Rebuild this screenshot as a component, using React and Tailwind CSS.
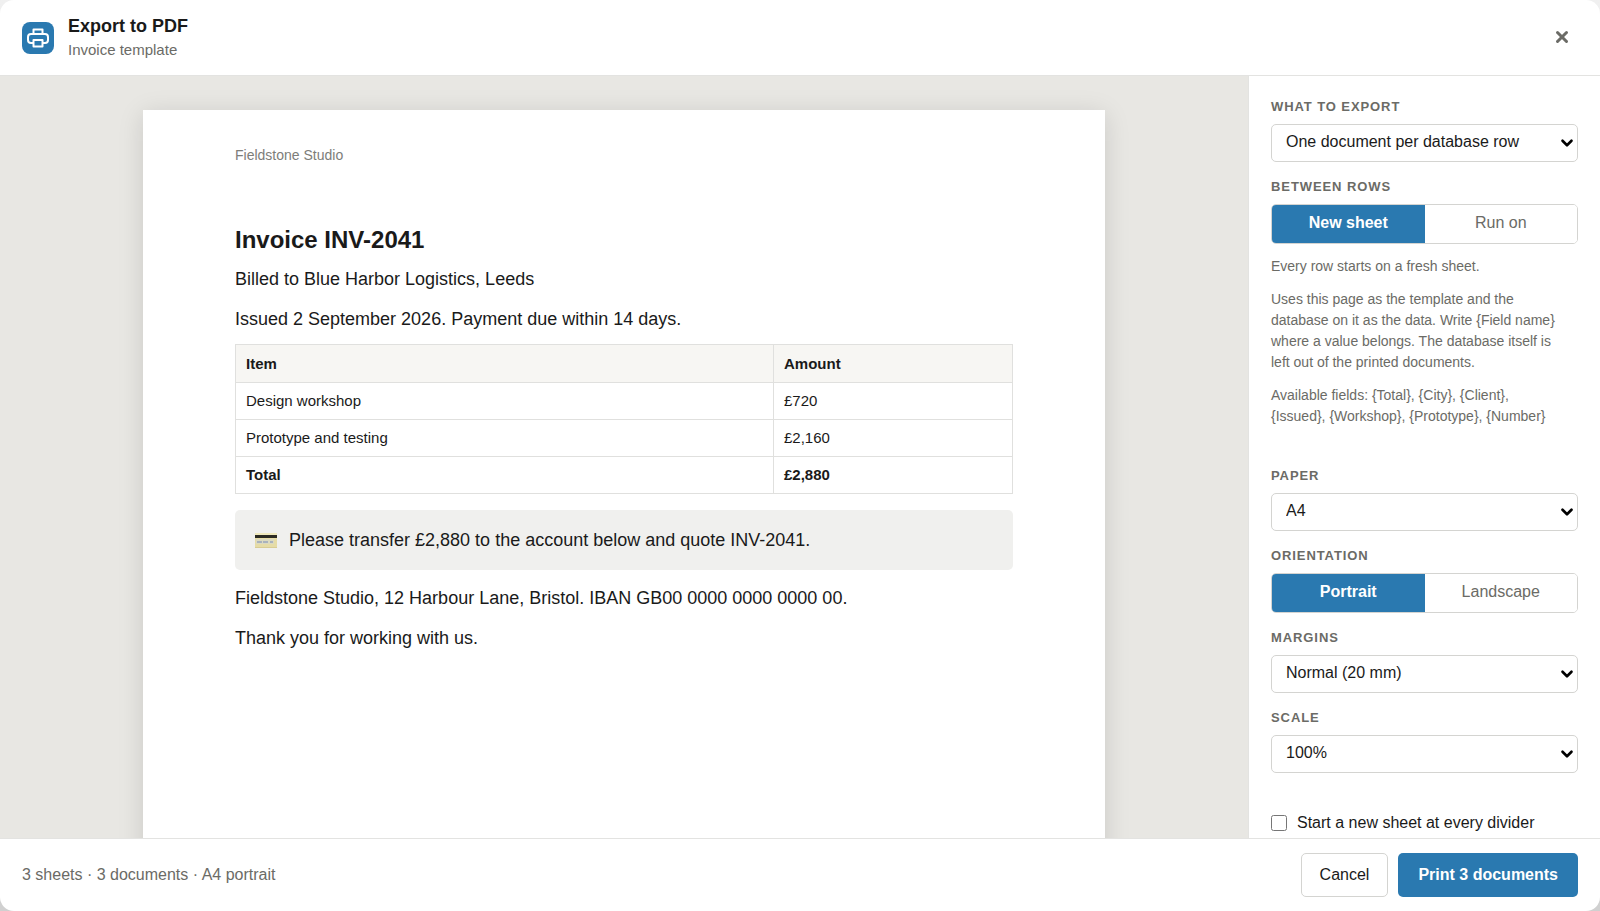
import { useState } from "react";
import { ChevronDown, X } from "lucide-react";

const lineItems = [
  { item: "Design workshop", amount: "£720" },
  { item: "Prototype and testing", amount: "£2,160" },
];

const templateHelp =
  "Uses this page as the template and the database on it as the data. Write {Field name} where a value belongs. The database itself is left out of the printed documents.";

const fieldsHelp =
  "Available fields: {Total}, {City}, {Client}, {Issued}, {Workshop}, {Prototype}, {Number}";

const PrinterIcon = () => (
  <svg
    viewBox="0 0 22 20"
    className="w-[22px] h-5"
    fill="none"
    stroke="currentColor"
    strokeWidth="2"
    strokeLinejoin="round"
    aria-hidden="true"
  >
    <path d="M6.5 6V1.5h9V6" />
    <path d="M6.5 15H4a3 3 0 0 1-3-3V9a3 3 0 0 1 3-3h14a3 3 0 0 1 3 3v3a3 3 0 0 1-3 3h-2.5" />
    <path d="M6.5 12h9v6.5h-9z" />
  </svg>
);

const CardIcon = () => (
  <svg viewBox="0 0 22 15" className="w-[22px] h-[15px]" aria-hidden="true">
    <rect width="22" height="15" rx="1" fill="#e6dca6" />
    <rect width="22" height="4" rx="1" fill="#f0e9bd" />
    <rect y="2" width="22" height="3" fill="#2b2a22" />
    <rect x="1" y="6" width="18" height="5" fill="#dcdac0" />
    <path d="M2 9h5M8 9h5M15 9h3" stroke="#a9b2bd" strokeWidth="2" />
    <rect y="14" width="22" height="1" fill="#d8cc94" />
  </svg>
);

const SelectField = ({ id, label, options }) => (
  <div>
    <label
      htmlFor={id}
      className="block mb-2 text-[13px] leading-[18px] font-bold uppercase tracking-[0.07em] text-[#6b6b66]"
    >
      {label}
    </label>
    <div className="relative">
      <select
        id={id}
        className="block appearance-none w-full h-[38px] pl-[14px] pr-7 pb-[2px] rounded-[5px] border border-[#d4d4d1] bg-white text-base text-[#1a1a1a]"
      >
        {options.map((o) => (
          <option key={o}>{o}</option>
        ))}
      </select>
      <ChevronDown
        size={18}
        strokeWidth={3.5}
        className="absolute right-[2px] top-[10px] text-black pointer-events-none"
      />
    </div>
  </div>
);

const Segmented = ({ id, label, options, value, onChange }) => (
  <div role="group" aria-labelledby={id}>
    <div
      id={id}
      className="mb-2 text-[13px] leading-[18px] font-bold uppercase tracking-[0.07em] text-[#6b6b66]"
    >
      {label}
    </div>
    <div className="flex h-10 rounded-[5px] border border-[#d4d4d1] overflow-hidden">
      {options.map((o) => (
        <button
          key={o}
          type="button"
          aria-pressed={o === value}
          onClick={() => onChange(o)}
          className={
            o === value
              ? "flex-1 pb-[2px] bg-[#2a79b0] text-white text-base font-bold"
              : "flex-1 pb-[2px] bg-white text-[#6b6b66] text-base"
          }
        >
          {o}
        </button>
      ))}
    </div>
  </div>
);

const InvoiceSheet = () => (
  <article className="w-full max-w-[962px] mx-auto aspect-[210/297] px-[92px] pt-9 bg-white shadow-[0_4px_24px_rgba(0,0,0,0.13)] text-lg leading-6">
    <p className="text-sm leading-[18px] text-[#7d7d79]">Fieldstone Studio</p>
    <h2 className="mt-[60px] text-2xl leading-8 font-bold">Invoice INV-2041</h2>
    <p className="mt-[11px]">Billed to Blue Harbor Logistics, Leeds</p>
    <p className="mt-4">Issued 2 September 2026. Payment due within 14 days.</p>
    <table className="w-full mt-[13px] border-collapse table-fixed text-[15px] leading-5 text-left">
      <thead>
        <tr className="bg-[#f7f6f3]">
          <th className="w-[538px] px-[10px] pt-[9px] pb-2 border border-[#e0e0de]">Item</th>
          <th className="px-[10px] pt-[9px] pb-2 border border-[#e0e0de]">Amount</th>
        </tr>
      </thead>
      <tbody>
        {lineItems.map((row) => (
          <tr key={row.item}>
            <td className="px-[10px] py-2 border border-[#e0e0de]">{row.item}</td>
            <td className="px-[10px] py-2 border border-[#e0e0de]">{row.amount}</td>
          </tr>
        ))}
        <tr className="font-bold">
          <td className="px-[10px] py-2 border border-[#e0e0de]">Total</td>
          <td className="px-[10px] py-2 border border-[#e0e0de]">£2,880</td>
        </tr>
      </tbody>
    </table>
    <div className="flex items-center gap-3 h-[60px] mt-4 px-5 rounded-[5px] bg-[#f0f0ee]">
      <CardIcon />
      <p>Please transfer £2,880 to the account below and quote INV-2041.</p>
    </div>
    <p className="mt-4">
      Fieldstone Studio, 12 Harbour Lane, Bristol. IBAN GB00 0000 0000 0000 00.
    </p>
    <p className="mt-4">Thank you for working with us.</p>
  </article>
);

const App = () => {
  const [between, setBetween] = useState("New sheet");
  const [orientation, setOrientation] = useState("Portrait");
  const [dividers, setDividers] = useState(false);

  return (
    <div className="h-screen bg-linear-to-b from-[#f0f0f0] to-[#d0d0d0] font-['Liberation_Sans',Arial,sans-serif] text-[#1a1a1a]">
      <div
        role="dialog"
        aria-labelledby="export-title"
        className="h-full flex flex-col bg-white rounded-[14px] overflow-hidden"
      >
        <header className="flex items-center gap-[14px] px-[22px] pt-[14px] pb-[13px] border-b border-[#e3e3e1]">
          <div className="w-8 h-8 flex items-center justify-center rounded-lg bg-[#2a79b0] text-white">
            <PrinterIcon />
          </div>
          <div className="flex-1">
            <h1 id="export-title" className="text-lg leading-6 font-bold">
              Export to PDF
            </h1>
            <p className="text-[15px] leading-6 text-[#6b6b66]">Invoice template</p>
          </div>
          <button
            type="button"
            aria-label="Close"
            className="w-8 h-8 pb-[2px] flex items-center justify-center text-[#6b6b66]"
          >
            <X size={18} strokeWidth={4} />
          </button>
        </header>

        <div className="flex flex-1 min-h-0">
          <main className="flex-1 overflow-hidden bg-[#e8e7e3] px-10 pt-[34px]">
            <InvoiceSheet />
          </main>

          <aside className="w-[352px] shrink-0 overflow-hidden border-l border-[#e3e3e1] px-[22px] pt-[22px]">
            <div className="flex flex-col gap-4">
              <SelectField
                id="what"
                label="What to export"
                options={["One document per database row", "This page only"]}
              />
              <Segmented
                id="between"
                label="Between rows"
                options={["New sheet", "Run on"]}
                value={between}
                onChange={setBetween}
              />
            </div>
            <div className="mt-3 pr-3 flex flex-col gap-3 text-sm leading-[21px] text-[#6b6b66]">
              <p>Every row starts on a fresh sheet.</p>
              <p>{templateHelp}</p>
              <p>{fieldsHelp}</p>
            </div>
            <div className="mt-10 flex flex-col gap-4">
              <SelectField id="paper" label="Paper" options={["A4", "A5", "Letter"]} />
              <Segmented
                id="orientation"
                label="Orientation"
                options={["Portrait", "Landscape"]}
                value={orientation}
                onChange={setOrientation}
              />
              <SelectField
                id="margins"
                label="Margins"
                options={["Normal (20 mm)", "Narrow (10 mm)"]}
              />
              <SelectField id="scale" label="Scale" options={["100%", "90%", "80%"]} />
            </div>
            <label className="mt-10 flex items-center gap-[10px] text-base leading-5">
              <input
                type="checkbox"
                checked={dividers}
                onChange={(e) => setDividers(e.target.checked)}
                className="w-4 h-4"
              />
              Start a new sheet at every divider
            </label>
          </aside>
        </div>

        <footer className="flex items-center gap-[10px] px-[22px] py-[14px] border-t border-[#e3e3e1]">
          <p className="flex-1 text-base leading-5 text-[#6b6b66]">
            3 sheets · 3 documents · A4 portrait
          </p>
          <button
            type="button"
            className="h-11 px-[18px] rounded-[5px] border border-[#d4d4d1] bg-white text-base"
          >
            Cancel
          </button>
          <button
            type="button"
            className="h-11 px-5 rounded-[5px] bg-[#2a79b0] text-base font-bold text-white"
          >
            Print 3 documents
          </button>
        </footer>
      </div>
    </div>
  );
};

export default App;
